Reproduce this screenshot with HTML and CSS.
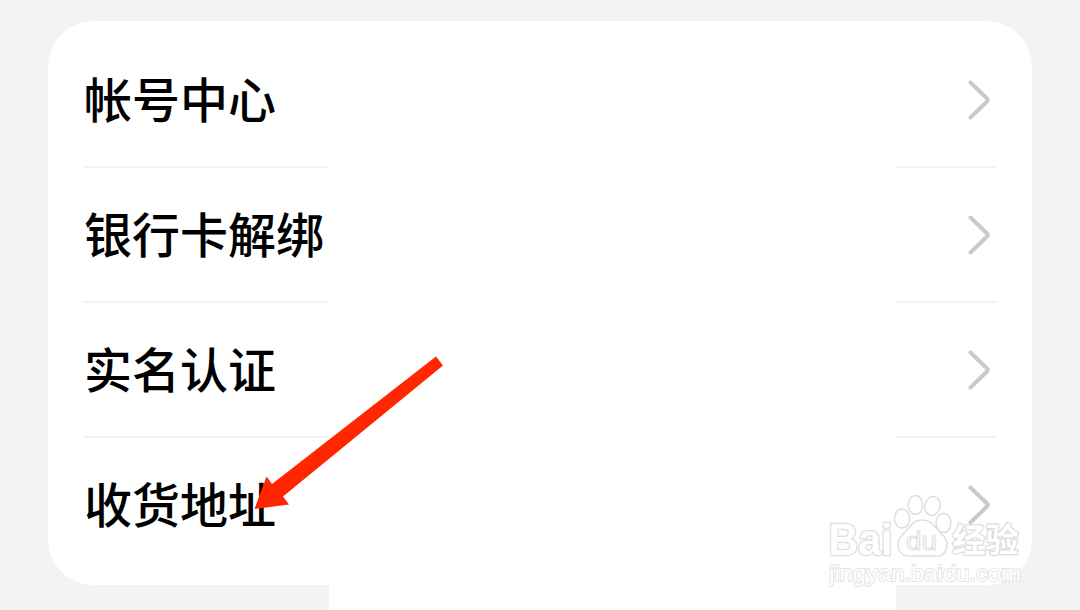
FILE: index.html
```
<!DOCTYPE html>
<html lang="zh-CN">
<head>
    <meta charset="UTF-8">
    <meta name="viewport" content="width=device-width, initial-scale=1.0">
    <title>帐号设置</title>
    <link rel="stylesheet" href="styles.css">
</head>
<body>
    <main class="page">
        <div class="card">
            <div class="row">
                <span class="label">帐号中心</span>
                <svg class="chevron" viewBox="0 0 24 42"><path d="M3.5 3.5 L20 19.5 Q21.5 21 20 22.5 L3.5 38.5"/></svg>
            </div>
            <div class="row">
                <span class="label">银行卡解绑</span>
                <svg class="chevron" viewBox="0 0 24 42"><path d="M3.5 3.5 L20 19.5 Q21.5 21 20 22.5 L3.5 38.5"/></svg>
            </div>
            <div class="row">
                <span class="label">实名认证</span>
                <svg class="chevron" viewBox="0 0 24 42"><path d="M3.5 3.5 L20 19.5 Q21.5 21 20 22.5 L3.5 38.5"/></svg>
            </div>
            <div class="row">
                <span class="label">收货地址</span>
                <svg class="chevron" viewBox="0 0 24 42"><path d="M3.5 3.5 L20 19.5 Q21.5 21 20 22.5 L3.5 38.5"/></svg>
            </div>
        </div>

        <!-- blank strip over the middle of the list -->
        <div class="mask"></div>

        <svg class="arrow" viewBox="0 0 190 156">
            <path d="M182 0.5 L189 9.5 L29 140.5 L35 148.5 L0.5 153 L12.5 120.5 L18 128 Z"/>
        </svg>

        <svg class="watermark" viewBox="0 0 200 100">
            <text class="mark" x="0.5" y="64.5" font-size="44" textLength="64" lengthAdjust="spacingAndGlyphs">Bai</text>
            <ellipse cx="74" cy="28.5" rx="7.5" ry="9.5"/>
            <ellipse cx="87.5" cy="15" rx="7.2" ry="9.5"/>
            <ellipse cx="104.5" cy="16" rx="7.5" ry="9.5" transform="rotate(12 105 16)"/>
            <ellipse cx="115.5" cy="33" rx="7.5" ry="9.5"/>
            <path d="M94 30 C103 30 106 36 112 42 C118 48 121 53 118 60 C115 68 107 66 95 66 C83 66 75 68 71 60 C68 52 72 47 77 42 C83 36 85 30 94 30 Z"/>
            <text class="du" x="78" y="60" font-size="25" textLength="31" lengthAdjust="spacingAndGlyphs">du</text>
            <text class="mark cjk" x="124.5" y="62" font-size="33" textLength="66" lengthAdjust="spacingAndGlyphs">经验</text>
            <text class="url" x="1" y="91" font-size="22" textLength="192" lengthAdjust="spacingAndGlyphs">jingyan.baidu.com</text>
        </svg>
    </main>
</body>
</html>
```

FILE: styles.css
```
:root {
    --background: #f2f3f5;
    --card: #ffffff;
    --text: #000000;
    --border: #f2f2f2;
    --chevron: #cacaca;
    --arrow: #ff2600;
    --mark: #dedede;
}

body {
    margin: 0;
    background: var(--background);
    color: var(--text);
    font-family: 'Noto Sans CJK SC', sans-serif;
}

.page {
    position: relative;
    box-sizing: border-box;
    height: 610px;
    padding: 21px 48px 25px;
    overflow: hidden;
}

.card {
    box-sizing: border-box;
    height: 564px;
    padding: 12px 36px;
    background: var(--card);
    border-radius: 46px;
}

.row {
    display: flex;
    align-items: center;
    justify-content: space-between;
    box-sizing: border-box;
    height: 135px;
    padding-right: 5px;
    border-bottom: 2px solid var(--border);
}

.row:last-child {
    border-color: transparent;
}

.label {
    padding-bottom: 5px;
    font-size: 48px;
    font-weight: 500;
    line-height: 70px;
}

.chevron {
    width: 24px;
    height: 42px;
    fill: none;
    stroke: var(--chevron);
    stroke-width: 4;
    stroke-linecap: round;
}

.mask {
    position: absolute;
    left: 329px;
    top: 22px;
    width: 567px;
    bottom: 0;
    background: var(--card);
}

.arrow {
    position: absolute;
    left: 254px;
    top: 356px;
    width: 190px;
    height: 156px;
    fill: var(--arrow);
}

.watermark {
    position: absolute;
    left: 828px;
    top: 490px;
    width: 200px;
    height: 100px;
    fill: #ffffff;
    stroke: var(--mark);
    stroke-width: 1.5;
}

.mark,
.du,
.url {
    font-family: 'Liberation Sans', sans-serif;
    font-weight: bold;
}

.mark {
    stroke-width: 2.6;
    stroke-linejoin: round;
    paint-order: stroke;
}

.du {
    font-weight: normal;
    stroke-width: 1;
}

.cjk {
    font-family: 'Noto Sans CJK SC', sans-serif;
}

.url {
    font-weight: normal;
    stroke: #e4e4e4;
    stroke-width: 1.8;
    paint-order: stroke;
}
```
